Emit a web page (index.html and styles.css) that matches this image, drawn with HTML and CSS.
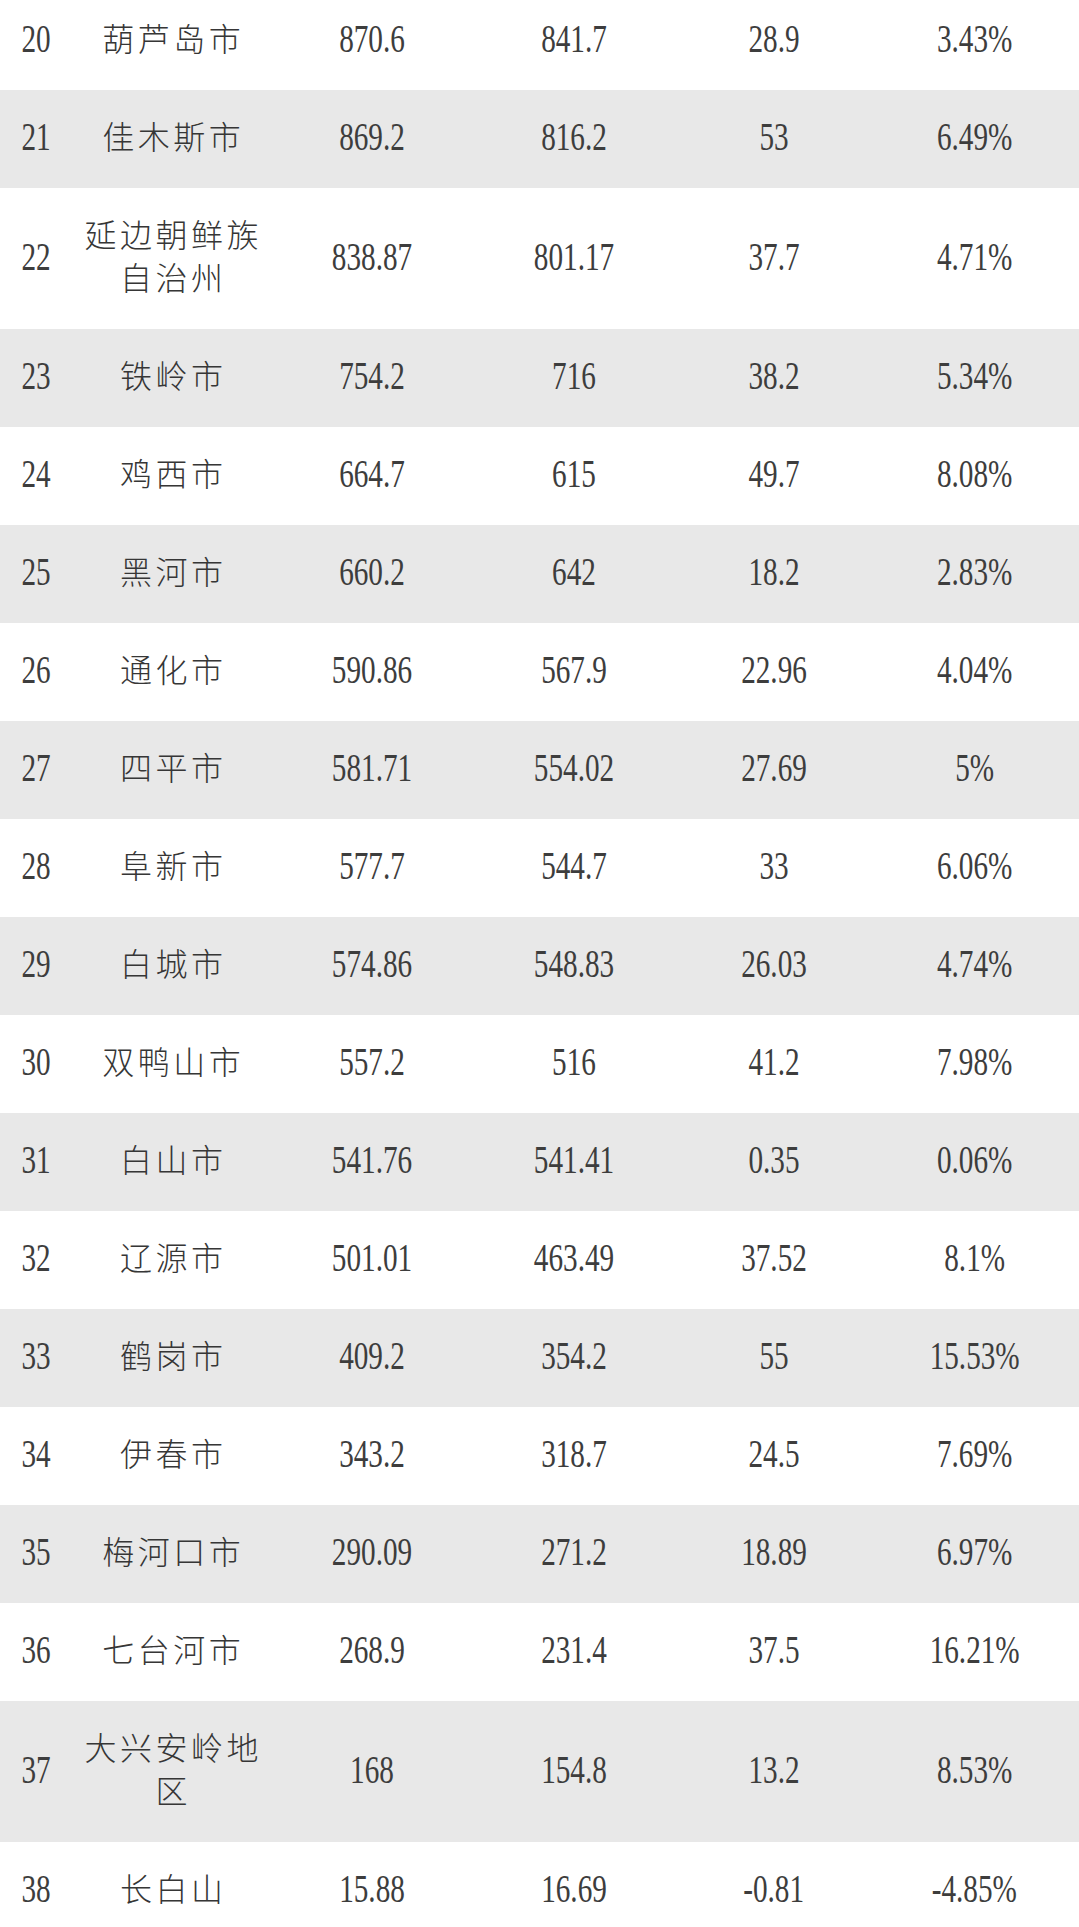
FILE: index.html
```html
<!DOCTYPE html>
<html lang="zh-CN">
<head>
<meta charset="utf-8">
<title>城市数据表</title>
<link rel="stylesheet" href="styles.css">
</head>
<body>
<div class="table">
  <div class="row"><div class="c"><span class="num">20</span></div><div class="c name">葫芦岛市</div><div class="c"><span class="num">870.6</span></div><div class="c"><span class="num">841.7</span></div><div class="c"><span class="num">28.9</span></div><div class="c"><span class="num">3.43%</span></div></div>
  <div class="row"><div class="c"><span class="num">21</span></div><div class="c name">佳木斯市</div><div class="c"><span class="num">869.2</span></div><div class="c"><span class="num">816.2</span></div><div class="c"><span class="num">53</span></div><div class="c"><span class="num">6.49%</span></div></div>
  <div class="row"><div class="c"><span class="num">22</span></div><div class="c name">延边朝鲜族自治州</div><div class="c"><span class="num">838.87</span></div><div class="c"><span class="num">801.17</span></div><div class="c"><span class="num">37.7</span></div><div class="c"><span class="num">4.71%</span></div></div>
  <div class="row"><div class="c"><span class="num">23</span></div><div class="c name">铁岭市</div><div class="c"><span class="num">754.2</span></div><div class="c"><span class="num">716</span></div><div class="c"><span class="num">38.2</span></div><div class="c"><span class="num">5.34%</span></div></div>
  <div class="row"><div class="c"><span class="num">24</span></div><div class="c name">鸡西市</div><div class="c"><span class="num">664.7</span></div><div class="c"><span class="num">615</span></div><div class="c"><span class="num">49.7</span></div><div class="c"><span class="num">8.08%</span></div></div>
  <div class="row"><div class="c"><span class="num">25</span></div><div class="c name">黑河市</div><div class="c"><span class="num">660.2</span></div><div class="c"><span class="num">642</span></div><div class="c"><span class="num">18.2</span></div><div class="c"><span class="num">2.83%</span></div></div>
  <div class="row"><div class="c"><span class="num">26</span></div><div class="c name">通化市</div><div class="c"><span class="num">590.86</span></div><div class="c"><span class="num">567.9</span></div><div class="c"><span class="num">22.96</span></div><div class="c"><span class="num">4.04%</span></div></div>
  <div class="row"><div class="c"><span class="num">27</span></div><div class="c name">四平市</div><div class="c"><span class="num">581.71</span></div><div class="c"><span class="num">554.02</span></div><div class="c"><span class="num">27.69</span></div><div class="c"><span class="num">5%</span></div></div>
  <div class="row"><div class="c"><span class="num">28</span></div><div class="c name">阜新市</div><div class="c"><span class="num">577.7</span></div><div class="c"><span class="num">544.7</span></div><div class="c"><span class="num">33</span></div><div class="c"><span class="num">6.06%</span></div></div>
  <div class="row"><div class="c"><span class="num">29</span></div><div class="c name">白城市</div><div class="c"><span class="num">574.86</span></div><div class="c"><span class="num">548.83</span></div><div class="c"><span class="num">26.03</span></div><div class="c"><span class="num">4.74%</span></div></div>
  <div class="row"><div class="c"><span class="num">30</span></div><div class="c name">双鸭山市</div><div class="c"><span class="num">557.2</span></div><div class="c"><span class="num">516</span></div><div class="c"><span class="num">41.2</span></div><div class="c"><span class="num">7.98%</span></div></div>
  <div class="row"><div class="c"><span class="num">31</span></div><div class="c name">白山市</div><div class="c"><span class="num">541.76</span></div><div class="c"><span class="num">541.41</span></div><div class="c"><span class="num">0.35</span></div><div class="c"><span class="num">0.06%</span></div></div>
  <div class="row"><div class="c"><span class="num">32</span></div><div class="c name">辽源市</div><div class="c"><span class="num">501.01</span></div><div class="c"><span class="num">463.49</span></div><div class="c"><span class="num">37.52</span></div><div class="c"><span class="num">8.1%</span></div></div>
  <div class="row"><div class="c"><span class="num">33</span></div><div class="c name">鹤岗市</div><div class="c"><span class="num">409.2</span></div><div class="c"><span class="num">354.2</span></div><div class="c"><span class="num">55</span></div><div class="c"><span class="num">15.53%</span></div></div>
  <div class="row"><div class="c"><span class="num">34</span></div><div class="c name">伊春市</div><div class="c"><span class="num">343.2</span></div><div class="c"><span class="num">318.7</span></div><div class="c"><span class="num">24.5</span></div><div class="c"><span class="num">7.69%</span></div></div>
  <div class="row"><div class="c"><span class="num">35</span></div><div class="c name">梅河口市</div><div class="c"><span class="num">290.09</span></div><div class="c"><span class="num">271.2</span></div><div class="c"><span class="num">18.89</span></div><div class="c"><span class="num">6.97%</span></div></div>
  <div class="row"><div class="c"><span class="num">36</span></div><div class="c name">七台河市</div><div class="c"><span class="num">268.9</span></div><div class="c"><span class="num">231.4</span></div><div class="c"><span class="num">37.5</span></div><div class="c"><span class="num">16.21%</span></div></div>
  <div class="row"><div class="c"><span class="num">37</span></div><div class="c name">大兴安岭地区</div><div class="c"><span class="num">168</span></div><div class="c"><span class="num">154.8</span></div><div class="c"><span class="num">13.2</span></div><div class="c"><span class="num">8.53%</span></div></div>
  <div class="row"><div class="c"><span class="num">38</span></div><div class="c name">长白山</div><div class="c"><span class="num">15.88</span></div><div class="c"><span class="num">16.69</span></div><div class="c"><span class="num">-0.81</span></div><div class="c"><span class="num">-4.85%</span></div></div>
</div>
</body>
</html>
```
FILE: styles.css
```css
html, body {
  margin: 0;
  padding: 0;
  background: #ffffff;
}

body {
  width: 1079px;
  overflow: hidden;
  color: #363636;
  font-family: "Noto Sans CJK SC", sans-serif;
}

.table {
  margin-top: -8px;
}

.row {
  display: grid;
  grid-template-columns: 72px 199px 202px 201px 200px 201px;
  align-items: stretch;
  background: #ffffff;
}

.row:nth-child(even) {
  background: #e8e8e8;
}

.c {
  display: flex;
  justify-content: center;
  align-items: center;
  line-height: 1;
}

.name {
  display: block;
  text-align: center;
  font-family: "Noto Sans CJK SC", sans-serif;
  font-weight: 300;
  font-size: 32px;
  line-height: 43px;
  letter-spacing: 3.5px;
  padding: 24px 6px 31px 9.5px;
}

.num {
  display: block;
  font-family: "Liberation Serif", serif;
  font-size: 40px;
  line-height: 1;
  color: #3d3d3d;
  transform: scaleX(0.73);
  transform-origin: center;
  padding-bottom: 4px;
}
```
